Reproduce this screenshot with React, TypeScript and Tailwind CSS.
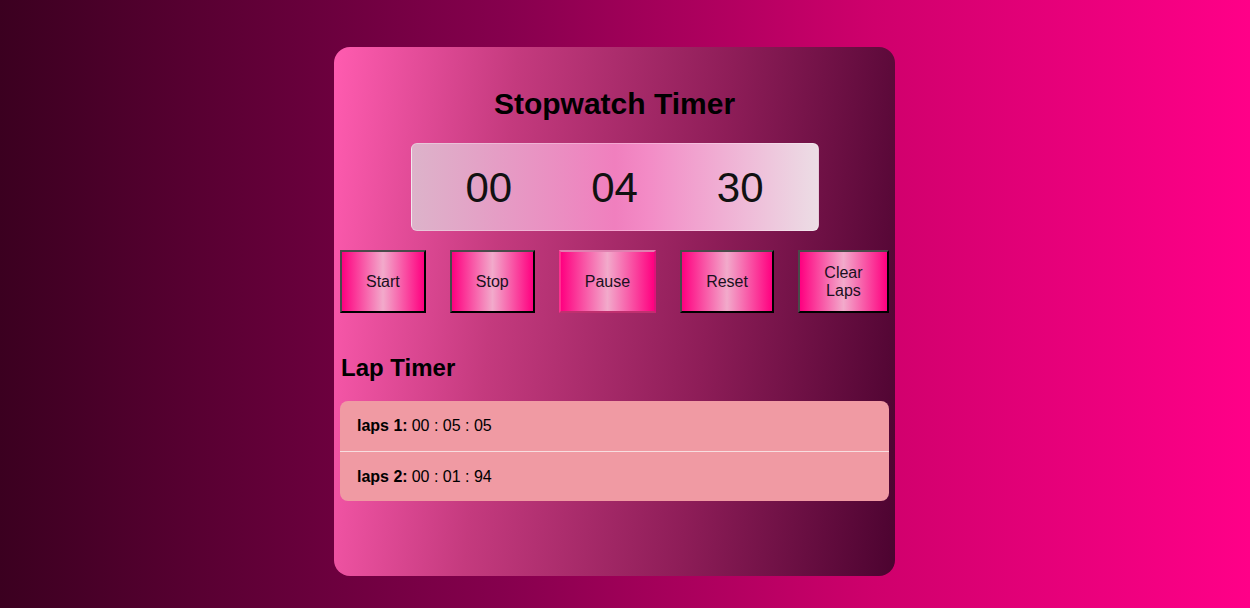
import React from "react";

const laps = [
  { label: "laps 1:", time: "00 : 05 : 05" },
  { label: "laps 2:", time: "00 : 01 : 94" },
];

const buttons = ["Start", "Stop", "Pause", "Reset", "Clear Laps"];

const App = () => {
  return (
    <div
      className="w-full min-h-[608px] flex pl-[334px] bg-[linear-gradient(to_right,#3b0020,#85004d_40%,#cf006c_70%,#ff0088)]"
      style={{ fontFamily: '"Liberation Sans", Arial, sans-serif' }}
    >
      <div className="mt-[47px] w-[561px] h-[529px] rounded-2xl bg-[linear-gradient(96deg,#ff5cb0,#c43a7e_30%,#8e1d58_65%,#4c0330)] pl-[6px] pr-[6px] pt-[40px] text-black">
        <h1 className="text-[30px] font-bold text-center leading-[34px]">
          Stopwatch Timer
        </h1>

        {/* 시간 표시 */}
        <div className="mt-[22px] mx-auto w-[408px] h-[88px] rounded-md border border-white/30 bg-[linear-gradient(to_right,#ddb3ca,#f07fbe_50%,#f38bc6_58%,#ecdde5)] flex items-center justify-center gap-[79px]">
          <span className="text-[42px] text-[#111]">00</span>
          <span className="text-[42px] text-[#111]">04</span>
          <span className="text-[42px] text-[#111]">30</span>
        </div>

        <div className="mt-[19px] flex justify-between">
          {buttons.map((b) => (
            <button
              key={b}
              className={
                "h-[63px] px-6 text-base leading-[18px] text-[#1a1020] border-2 bg-[linear-gradient(to_right,#ff0080,#f2aacb_50%,#ff0080)] " +
                (b === "Pause"
                  ? "border-t-[#e080b0] border-l-[#ff3090] border-r-[#e0107a] border-b-[#c0306f]"
                  : "border-t-[#4a4a4a] border-l-[#4a4a4a] border-r-black border-b-black") +
                (b === "Clear Laps" ? " w-[91px] px-0" : "")
              }
            >
              {b}
            </button>
          ))}
        </div>

        <h2 className="mt-[41px] ml-px text-2xl font-bold leading-[28px]">
          Lap Timer
        </h2>

        <ul className="mt-[19px] rounded-lg bg-[#f09aa3] overflow-hidden">
          {laps.map((lap, i) => (
            <li
              key={i}
              className={
                "h-[50px] flex items-center pl-[17px] text-base " +
                (i > 0 ? "border-t border-[#f8dde0]" : "")
              }
            >
              <b className="mr-1">{lap.label}</b>
              {lap.time}
            </li>
          ))}
        </ul>
      </div>
    </div>
  );
};

export default App;
